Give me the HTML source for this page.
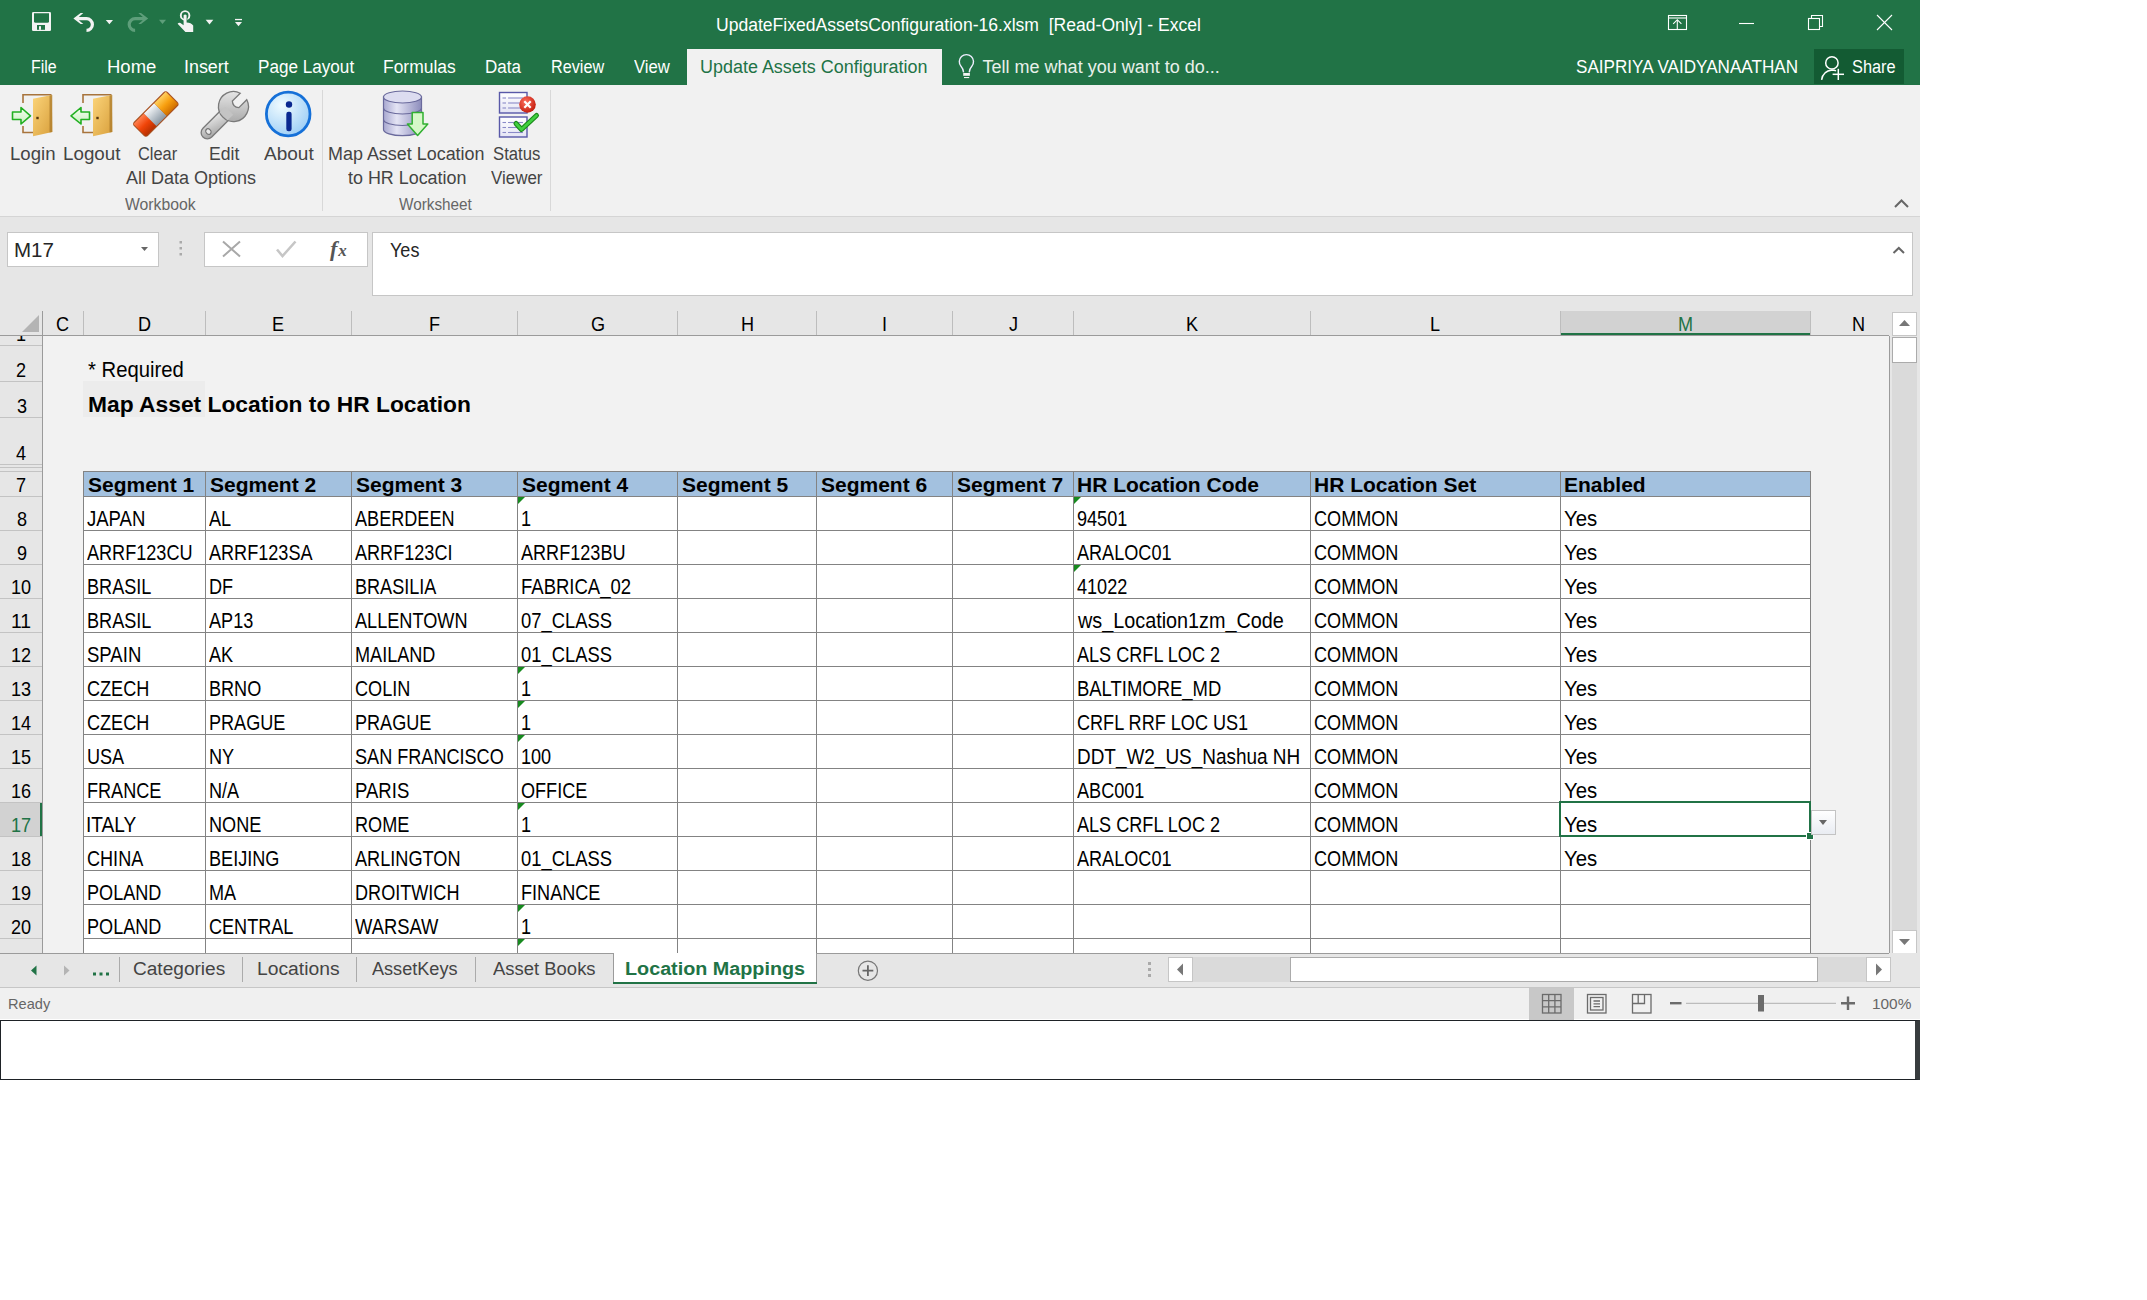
<!DOCTYPE html>
<html><head><meta charset="utf-8"><title>Excel</title>
<style>
*{margin:0;padding:0;box-sizing:border-box}
html,body{width:2147px;height:1300px;overflow:hidden;background:#fff}
body{position:relative;font-family:"Liberation Sans",sans-serif}
.a{position:absolute}
.t{position:absolute;white-space:pre;line-height:1;transform-origin:0 0}
svg{position:absolute;overflow:visible}
</style></head><body>
<div class="a" style="left:0px;top:0px;width:1920px;height:85px;background:#217346"></div>
<div class="a" style="left:687px;top:49px;width:255px;height:36px;background:#f1f1f1"></div>
<div class="t" style="left:716.02px;top:16px;font:normal 18px 'Liberation Sans';line-height:1;color:#fff;transform:scaleX(0.9753)">UpdateFixedAssetsConfiguration-16.xlsm  [Read-Only] - Excel</div>
<div class="t" style="left:31.31px;top:58px;font:normal 18px 'Liberation Sans';line-height:1;color:#fff;transform:scaleX(0.8859)">File</div>
<div class="t" style="left:106.57px;top:58px;font:normal 18px 'Liberation Sans';line-height:1;color:#fff;transform:scaleX(1.0276)">Home</div>
<div class="t" style="left:184.21px;top:58px;font:normal 18px 'Liberation Sans';line-height:1;color:#fff;transform:scaleX(0.9928)">Insert</div>
<div class="t" style="left:257.65px;top:58px;font:normal 18px 'Liberation Sans';line-height:1;color:#fff;transform:scaleX(0.9512)">Page Layout</div>
<div class="t" style="left:382.83px;top:58px;font:normal 18px 'Liberation Sans';line-height:1;color:#fff;transform:scaleX(0.9687)">Formulas</div>
<div class="t" style="left:484.86px;top:58px;font:normal 18px 'Liberation Sans';line-height:1;color:#fff;transform:scaleX(0.9445)">Data</div>
<div class="t" style="left:550.80px;top:58px;font:normal 18px 'Liberation Sans';line-height:1;color:#fff;transform:scaleX(0.8997)">Review</div>
<div class="t" style="left:634.20px;top:58px;font:normal 18px 'Liberation Sans';line-height:1;color:#fff;transform:scaleX(0.9272)">View</div>
<div class="t" style="left:699.50px;top:58px;font:normal 18px 'Liberation Sans';line-height:1;color:#217346;transform:scaleX(0.9973)">Update Assets Configuration</div>
<div class="t" style="left:982.60px;top:58px;font:normal 18px 'Liberation Sans';line-height:1;color:#e8f0ea">Tell me what you want to do...</div>
<div class="t" style="left:1576.40px;top:58px;font:normal 18px 'Liberation Sans';line-height:1;color:#fff;transform:scaleX(0.9498)">SAIPRIYA VAIDYANAATHAN</div>
<div class="a" style="left:1814px;top:49px;width:90px;height:35px;background:#135b33"></div>
<div class="t" style="left:1852.00px;top:58px;font:normal 18px 'Liberation Sans';line-height:1;color:#fff;transform:scaleX(0.9079)">Share</div>
<svg class="a" style="left:0px;top:0px" width="260" height="48" viewBox="0 0 260 48"><rect x="32" y="12" width="19" height="19" rx="1.2" fill="#f3f3f3"/><path d="M34,13.2 H49 V21.2 Q49,22.8 47.4,22.8 H35.6 Q34,22.8 34,21.2 Z" fill="#217346"/><rect x="37" y="25" width="8" height="4.8" fill="#217346"/><rect x="39" y="26.2" width="2" height="3.6" fill="#f3f3f3"/><path d="M73.4,18.5 L80.6,12.9 H83.3 L78.8,17 H86.5 A7.5,7.5 0 0 1 86.5,32 V28.8 A4.3,4.3 0 0 0 86.5,20.2 H78.8 L83.3,24.1 H80.6 Z" fill="#f3f3f3"/><polygon points="105.8,20 113,20 109.4,24.2" fill="#f3f3f3"/><path d="M148.2,18.5 L141,12.9 H138.3 L142.8,17 H135.1 A7.5,7.5 0 0 0 135.1,32 V28.8 A4.3,4.3 0 0 1 135.1,20.2 H142.8 L138.3,24.1 H141 Z" fill="#5e9e7a"/><polygon points="159,19.8 166,19.8 162.5,24" fill="#5e9e7a"/><circle cx="185.1" cy="15.4" r="4.3" fill="none" stroke="#f3f3f3" stroke-width="1.9"/><path d="M183.6,15.2 Q185.1,13.6 186.6,15.2 V22.6" fill="none" stroke="#217346" stroke-width="1.6"/><path d="M183.6,15.2 Q185.1,13.6 186.6,15.2 V22.6 Q191,22.6 193.2,25.6 V32 H185.4 L177.6,23.8 Q178.6,22.2 180.5,22.9 L183.6,25.2 Z" fill="#f3f3f3"/><polygon points="205.7,19.8 213.3,19.8 209.5,24.4" fill="#f3f3f3"/><rect x="235" y="18.9" width="7" height="1.3" fill="#f3f3f3"/><polygon points="235,22 242,22 238.5,26.2" fill="#f3f3f3"/></svg>
<svg class="a" style="left:1660px;top:10px" width="240" height="25" viewBox="1660 10 240 25"><g fill="none" stroke="#fff" stroke-width="1.1"><rect x="1668.5" y="15.5" width="18" height="14"/><line x1="1668.5" y1="18" x2="1686.5" y2="18"/><line x1="1677.3" y1="20" x2="1677.3" y2="29.5"/><polyline points="1673.2,23.8 1677.3,19.7 1681.4,23.8"/><line x1="1739" y1="23.5" x2="1754" y2="23.5"/><rect x="1808.5" y="18.5" width="11" height="11"/><polyline points="1811.5,18.5 1811.5,15.5 1822.5,15.5 1822.5,26.5 1819.5,26.5"/><line x1="1877" y1="15" x2="1892" y2="30"/><line x1="1892" y1="15" x2="1877" y2="30"/></g></svg>
<svg class="a" style="left:955px;top:52px" width="25" height="30" viewBox="955 52 25 30"><path d="M963.6,72.3 Q963,68.5 961,66.3 A7.1,7.1 0 1 1 971.8,66.3 Q969.8,68.5 969.2,72.3" fill="none" stroke="#eef" stroke-width="1.4"/><rect x="963.2" y="73" width="6.7" height="2.8" fill="#f3f3f3"/><rect x="964" y="77" width="5.2" height="1.1" fill="#f3f3f3"/></svg>
<svg class="a" style="left:1815px;top:52px" width="35" height="32" viewBox="1815 52 35 32"><g fill="none" stroke="#fff" stroke-width="1.5"><circle cx="1831.9" cy="62.9" r="6.2"/><path d="M1821.6,79.8 Q1823,71 1832,70 Q1834.5,70 1836,70.8"/><line x1="1832.6" y1="74.3" x2="1844" y2="74.3"/><line x1="1838.3" y1="68.8" x2="1838.3" y2="80"/></g></svg>
<div class="a" style="left:0px;top:85px;width:1920px;height:131px;background:#f1f1f1"></div>
<div class="a" style="left:0px;top:216px;width:1920px;height:1px;background:#d5d5d5"></div>
<div class="t" style="left:10.37px;top:145px;font:normal 18px 'Liberation Sans';line-height:1;color:#444;transform:scaleX(1.0326)">Login</div>
<div class="t" style="left:63.16px;top:145px;font:normal 18px 'Liberation Sans';line-height:1;color:#444;transform:scaleX(1.0434)">Logout</div>
<div class="t" style="left:137.90px;top:145px;font:normal 18px 'Liberation Sans';line-height:1;color:#444;transform:scaleX(0.9089)">Clear</div>
<div class="t" style="left:209.32px;top:145px;font:normal 18px 'Liberation Sans';line-height:1;color:#444;transform:scaleX(0.9762)">Edit</div>
<div class="t" style="left:264.00px;top:145px;font:normal 18px 'Liberation Sans';line-height:1;color:#444;transform:scaleX(1.0566)">About</div>
<div class="t" style="left:126.00px;top:169px;font:normal 18px 'Liberation Sans';line-height:1;color:#444">All Data Options</div>
<div class="t" style="left:328.30px;top:145px;font:normal 18px 'Liberation Sans';line-height:1;color:#444;transform:scaleX(0.9963)">Map Asset Location</div>
<div class="t" style="left:348.20px;top:169px;font:normal 18px 'Liberation Sans';line-height:1;color:#444;transform:scaleX(0.9945)">to HR Location</div>
<div class="t" style="left:493.00px;top:145px;font:normal 18px 'Liberation Sans';line-height:1;color:#444;transform:scaleX(0.9269)">Status</div>
<div class="t" style="left:491.40px;top:169px;font:normal 18px 'Liberation Sans';line-height:1;color:#444;transform:scaleX(0.9415)">Viewer</div>
<div class="t" style="left:125.10px;top:197px;font:normal 16px 'Liberation Sans';line-height:1;color:#666;transform:scaleX(0.9844)">Workbook</div>
<div class="t" style="left:399.40px;top:197px;font:normal 16px 'Liberation Sans';line-height:1;color:#666;transform:scaleX(0.9565)">Worksheet</div>
<div class="a" style="left:322px;top:90px;width:1px;height:121px;background:#d8d8d8"></div>
<div class="a" style="left:550px;top:90px;width:1px;height:121px;background:#d8d8d8"></div>
<svg class="a" style="left:0px;top:85px" width="560" height="60" viewBox="0 85 560 60"><defs>
<linearGradient id="door" x1="0" y1="0" x2="1" y2="1"><stop offset="0" stop-color="#fbd47a"/><stop offset="1" stop-color="#d9a03c"/></linearGradient>
<linearGradient id="arr" x1="0" y1="0" x2="0" y2="1"><stop offset="0" stop-color="#f4fff0"/><stop offset="1" stop-color="#c8f0c0"/></linearGradient>
<linearGradient id="silver" x1="0" y1="0" x2="0" y2="1"><stop offset="0" stop-color="#f6f8fa"/><stop offset="1" stop-color="#8a98a4"/></linearGradient>
<linearGradient id="red" x1="0" y1="0" x2="0" y2="1"><stop offset="0" stop-color="#ff8050"/><stop offset="0.5" stop-color="#f04408"/><stop offset="1" stop-color="#b83000"/></linearGradient>
<linearGradient id="orng" x1="0" y1="0" x2="0" y2="1"><stop offset="0" stop-color="#ffd060"/><stop offset="0.5" stop-color="#f8a010"/><stop offset="1" stop-color="#d07000"/></linearGradient>
<linearGradient id="wr" x1="0" y1="0" x2="1" y2="1"><stop offset="0" stop-color="#f0f0f0"/><stop offset="1" stop-color="#a0a0a0"/></linearGradient>
<radialGradient id="info" cx="0.35" cy="0.3" r="0.8"><stop offset="0" stop-color="#f0fbff"/><stop offset="1" stop-color="#98cbf5"/></radialGradient>
<linearGradient id="db" x1="0" y1="0" x2="1" y2="0"><stop offset="0" stop-color="#a8a8d0"/><stop offset="0.35" stop-color="#e4e4f4"/><stop offset="1" stop-color="#8c8cbc"/></linearGradient>
<radialGradient id="rc" cx="0.4" cy="0.35" r="0.7"><stop offset="0" stop-color="#ff7060"/><stop offset="1" stop-color="#c01808"/></radialGradient>
<linearGradient id="doc" x1="0" y1="0" x2="0" y2="1"><stop offset="0" stop-color="#fff"/><stop offset="1" stop-color="#e4e4f4"/></linearGradient>
</defs><g transform="translate(0,0)"><path d="M23,103 V94.8 H51.5 M23,126 V132.5 H33" fill="none" stroke="#a8743c" stroke-width="1.6"/><polygon points="33,98.8 51.8,95 52.3,132 33,136.2" fill="url(#door)"/><polygon points="49.5,95.5 52.3,95 52.3,132 49.5,132.5" fill="#a8782a" opacity="0.7"/><rect x="36.3" y="116.8" width="2.4" height="2.4" fill="#5a3a10"/></g><g transform="translate(60,0)"><path d="M23,103 V94.8 H51.5 M23,126 V132.5 H33" fill="none" stroke="#a8743c" stroke-width="1.6"/><polygon points="33,98.8 51.8,95 52.3,132 33,136.2" fill="url(#door)"/><polygon points="49.5,95.5 52.3,95 52.3,132 49.5,132.5" fill="#a8782a" opacity="0.7"/><rect x="36.3" y="116.8" width="2.4" height="2.4" fill="#5a3a10"/></g><polygon points="12.5,112 21,112 21,107.5 30.5,115.8 21,124 21,119.5 12.5,119.5" fill="url(#arr)" stroke="#22b022" stroke-width="1.6" stroke-linejoin="round"/><polygon points="89.5,112 81,112 81,107.5 71,115.8 81,124 81,119.5 89.5,119.5" fill="url(#arr)" stroke="#22b022" stroke-width="1.6" stroke-linejoin="round"/><g transform="translate(155.8,114) rotate(-45)"><rect x="-24" y="-10" width="48" height="20" rx="3.5" fill="#a85020"/><path d="M-22.8,-8.8 H-8 V8.8 H-22.8 Q-23,0 -22.8,-8.8 Z" fill="url(#red)"/><rect x="-8" y="-8.8" width="14.5" height="17.6" fill="url(#silver)"/><path d="M6.5,-8.8 H22.8 Q23,0 22.8,8.8 H6.5 Z" fill="url(#orng)"/></g><g transform="translate(233.5,106.5) rotate(45)"><path d="M-6.2,8 H6.2 V37 A6.2,6.2 0 0 1 -6.2,37 Z" fill="url(#wr)" stroke="#7a7a7a" stroke-width="1.3"/><path d="M-4.6,-14.2 A15,15 0 1 0 4.6,-14.2 V-3 Q0,1.2 -4.6,-3 Z" fill="url(#wr)" stroke="#7a7a7a" stroke-width="1.3"/><rect x="-5.55" y="6" width="11.1" height="8" fill="#c4c4c4"/><ellipse cx="0" cy="35.5" rx="3" ry="2.4" fill="#eaeaea" stroke="#777" stroke-width="1.2"/></g><circle cx="288.2" cy="114" r="21.8" fill="url(#info)" stroke="#1570d8" stroke-width="2.8"/><circle cx="289" cy="104.5" r="3.2" fill="#0a2890"/><rect x="286.3" y="111.8" width="5.3" height="19.5" rx="2.2" fill="#0a2890"/><path d="M383.5,97 V129.5 A19,6.2 0 0 0 421.5,129.5 V97 Z" fill="url(#db)" stroke="#6a6a9c" stroke-width="1.2"/><ellipse cx="402.5" cy="97" rx="19" ry="6" fill="#dcdcf0" stroke="#6a6a9c" stroke-width="1.2"/><path d="M383.5,108 A19,6 0 0 0 421.5,108 M383.5,119.5 A19,6 0 0 0 421.5,119.5" fill="none" stroke="#6a6a9c" stroke-width="1.2"/><polygon points="412.2,112.5 423,112.5 423,124 427.8,124 417.6,135.5 407.4,124 412.2,124" fill="#d6f8c8" stroke="#30b030" stroke-width="1.5" stroke-linejoin="round"/><rect x="499.5" y="92.5" width="27.5" height="20.5" fill="url(#doc)" stroke="#5858a8" stroke-width="1.4"/><line x1="502.5" y1="98.0" x2="506" y2="98.0" stroke="#8a8ac8" stroke-width="1.1"/><line x1="508" y1="98.0" x2="523" y2="98.0" stroke="#8a8ac8" stroke-width="1.1"/><line x1="502.5" y1="103.0" x2="506" y2="103.0" stroke="#8a8ac8" stroke-width="1.1"/><line x1="508" y1="103.0" x2="523" y2="103.0" stroke="#8a8ac8" stroke-width="1.1"/><line x1="502.5" y1="108.0" x2="506" y2="108.0" stroke="#8a8ac8" stroke-width="1.1"/><line x1="508" y1="108.0" x2="523" y2="108.0" stroke="#8a8ac8" stroke-width="1.1"/><rect x="499.5" y="117" width="27.5" height="20" fill="url(#doc)" stroke="#5858a8" stroke-width="1.4"/><line x1="502.5" y1="122.5" x2="506" y2="122.5" stroke="#8a8ac8" stroke-width="1.1"/><line x1="508" y1="122.5" x2="523" y2="122.5" stroke="#8a8ac8" stroke-width="1.1"/><line x1="502.5" y1="127.5" x2="506" y2="127.5" stroke="#8a8ac8" stroke-width="1.1"/><line x1="508" y1="127.5" x2="523" y2="127.5" stroke="#8a8ac8" stroke-width="1.1"/><line x1="502.5" y1="132.5" x2="506" y2="132.5" stroke="#8a8ac8" stroke-width="1.1"/><line x1="508" y1="132.5" x2="523" y2="132.5" stroke="#8a8ac8" stroke-width="1.1"/><circle cx="527.5" cy="104.5" r="8.3" fill="url(#rc)"/><path d="M524.3,101.3 L530.7,107.7 M530.7,101.3 L524.3,107.7" stroke="#fff" stroke-width="2.2"/><path d="M516,123.5 L521.5,129.5 L536.5,115.5" fill="none" stroke="#1a8a1a" stroke-width="5" stroke-linejoin="round" stroke-linecap="round"/><path d="M516,123.5 L521.5,129.5 L536.5,115.5" fill="none" stroke="#40d040" stroke-width="2.6" stroke-linejoin="round" stroke-linecap="round"/></svg>
<div class="a" style="left:0px;top:217px;width:1920px;height:94px;background:#e6e6e6"></div>
<div class="a" style="left:7px;top:232px;width:152px;height:35px;background:#fff;border:1px solid #c6c6c6"></div>
<div class="t" style="left:14.37px;top:240px;font:normal 20px 'Liberation Sans';line-height:1;color:#262626;transform:scaleX(1.0269)">M17</div>
<div class="a" style="left:204px;top:232px;width:164px;height:35px;background:#fff;border:1px solid #c6c6c6"></div>
<div class="a" style="left:372px;top:232px;width:1541px;height:64px;background:#fff;border:1px solid #c6c6c6"></div>
<div class="t" style="left:389.50px;top:240px;font:normal 20px 'Liberation Sans';line-height:1;color:#262626;transform:scaleX(0.9011)">Yes</div>
<svg class="a" style="left:130px;top:195px" width="1790" height="70" viewBox="130 195 1790 70"><polygon points="141,247 148,247 144.5,251" fill="#666"/><rect x="179.5" y="241" width="2.5" height="2.5" fill="#aaa"/><rect x="179.5" y="247" width="2.5" height="2.5" fill="#aaa"/><rect x="179.5" y="253" width="2.5" height="2.5" fill="#aaa"/><path d="M223,241.5 L240,256.5 M240,241.5 L223,256.5" stroke="#a8a8a8" stroke-width="2"/><path d="M277,249.5 L282.5,256 L295.5,241.5" fill="none" stroke="#c6c6c6" stroke-width="2.6"/><text x="330" y="256" font-family="Liberation Serif" font-style="italic" font-weight="bold" font-size="22" fill="#555">f<tspan font-size="17" dx="1">x</tspan></text><polyline points="1893.5,253 1898.8,248 1904,253" fill="none" stroke="#666" stroke-width="2"/><polyline points="1895,207 1901.5,200.5 1908,207" fill="none" stroke="#666" stroke-width="2"/></svg>
<div class="a" style="left:0px;top:311px;width:1890px;height:25px;background:#e6e6e6"></div>
<div class="a" style="left:83px;top:311px;width:1px;height:24px;background:#bdbdbd"></div>
<div class="t" style="left:56.11px;top:313px;font:normal 21px 'Liberation Sans';line-height:1;color:#000;transform:scaleX(0.8613)">C</div>
<div class="a" style="left:205px;top:311px;width:1px;height:24px;background:#bdbdbd"></div>
<div class="t" style="left:137.61px;top:313px;font:normal 21px 'Liberation Sans';line-height:1;color:#000;transform:scaleX(0.8613)">D</div>
<div class="a" style="left:351px;top:311px;width:1px;height:24px;background:#bdbdbd"></div>
<div class="t" style="left:272.04px;top:313px;font:normal 21px 'Liberation Sans';line-height:1;color:#000;transform:scaleX(0.8613)">E</div>
<div class="a" style="left:517px;top:311px;width:1px;height:24px;background:#bdbdbd"></div>
<div class="t" style="left:428.90px;top:313px;font:normal 21px 'Liberation Sans';line-height:1;color:#000;transform:scaleX(0.8613)">F</div>
<div class="a" style="left:677px;top:311px;width:1px;height:24px;background:#bdbdbd"></div>
<div class="t" style="left:590.61px;top:313px;font:normal 21px 'Liberation Sans';line-height:1;color:#000;transform:scaleX(0.8613)">G</div>
<div class="a" style="left:816px;top:311px;width:1px;height:24px;background:#bdbdbd"></div>
<div class="t" style="left:740.54px;top:313px;font:normal 21px 'Liberation Sans';line-height:1;color:#000;transform:scaleX(0.8613)">H</div>
<div class="a" style="left:952px;top:311px;width:1px;height:24px;background:#bdbdbd"></div>
<div class="t" style="left:882.35px;top:313px;font:normal 21px 'Liberation Sans';line-height:1;color:#000;transform:scaleX(0.8613)">I</div>
<div class="a" style="left:1073px;top:311px;width:1px;height:24px;background:#bdbdbd"></div>
<div class="t" style="left:1009.12px;top:313px;font:normal 21px 'Liberation Sans';line-height:1;color:#000;transform:scaleX(0.8613)">J</div>
<div class="a" style="left:1310px;top:311px;width:1px;height:24px;background:#bdbdbd"></div>
<div class="t" style="left:1185.54px;top:313px;font:normal 21px 'Liberation Sans';line-height:1;color:#000;transform:scaleX(0.8613)">K</div>
<div class="a" style="left:1560px;top:311px;width:1px;height:24px;background:#bdbdbd"></div>
<div class="t" style="left:1430.33px;top:313px;font:normal 21px 'Liberation Sans';line-height:1;color:#000;transform:scaleX(0.8613)">L</div>
<div class="a" style="left:1561px;top:311px;width:249px;height:24px;background:#d2d2d2"></div>
<div class="a" style="left:1810px;top:311px;width:1px;height:24px;background:#bdbdbd"></div>
<div class="t" style="left:1678.18px;top:313px;font:normal 21px 'Liberation Sans';line-height:1;color:#217346;transform:scaleX(0.8613)">M</div>
<div class="t" style="left:1852.04px;top:313px;font:normal 21px 'Liberation Sans';line-height:1;color:#000;transform:scaleX(0.8613)">N</div>
<div class="a" style="left:0px;top:335px;width:1889px;height:1px;background:#9b9b9b"></div>
<div class="a" style="left:1561px;top:333px;width:249px;height:2px;background:#217346"></div>
<svg class="a" style="left:0;top:311px" width="42" height="24"><polygon points="22,21 39,4 39,21" fill="#b4b4b4"/></svg>
<div class="a" style="left:0px;top:336px;width:42px;height:617px;background:#e6e6e6"></div>
<div class="a" style="left:42px;top:336px;width:1847px;height:617px;background:#f2f2f2"></div>
<div class="a" style="left:0px;top:802px;width:41px;height:34px;background:#d2d2d2"></div>
<div class="a" style="left:42px;top:311px;width:1px;height:642px;background:#9b9b9b"></div>
<div class="a" style="left:40px;top:803px;width:2px;height:33px;background:#217346"></div>
<div class="a" style="left:1889px;top:336px;width:1px;height:617px;background:#9b9b9b"></div>
<div class="a" style="left:0px;top:345px;width:42px;height:1px;background:#c3c3c3"></div>
<div class="a" style="left:0px;top:381px;width:42px;height:1px;background:#c3c3c3"></div>
<div class="a" style="left:0px;top:417px;width:42px;height:1px;background:#c3c3c3"></div>
<div class="a" style="left:0px;top:464px;width:42px;height:1px;background:#c3c3c3"></div>
<div class="a" style="left:0px;top:467px;width:42px;height:1px;background:#c3c3c3"></div>
<div class="a" style="left:0px;top:471px;width:42px;height:1px;background:#c3c3c3"></div>
<div class="a" style="left:0px;top:496px;width:42px;height:1px;background:#c3c3c3"></div>
<div class="a" style="left:0px;top:530px;width:42px;height:1px;background:#c3c3c3"></div>
<div class="a" style="left:0px;top:564px;width:42px;height:1px;background:#c3c3c3"></div>
<div class="a" style="left:0px;top:598px;width:42px;height:1px;background:#c3c3c3"></div>
<div class="a" style="left:0px;top:632px;width:42px;height:1px;background:#c3c3c3"></div>
<div class="a" style="left:0px;top:666px;width:42px;height:1px;background:#c3c3c3"></div>
<div class="a" style="left:0px;top:700px;width:42px;height:1px;background:#c3c3c3"></div>
<div class="a" style="left:0px;top:734px;width:42px;height:1px;background:#c3c3c3"></div>
<div class="a" style="left:0px;top:768px;width:42px;height:1px;background:#c3c3c3"></div>
<div class="a" style="left:0px;top:802px;width:42px;height:1px;background:#c3c3c3"></div>
<div class="a" style="left:0px;top:836px;width:42px;height:1px;background:#c3c3c3"></div>
<div class="a" style="left:0px;top:870px;width:42px;height:1px;background:#c3c3c3"></div>
<div class="a" style="left:0px;top:904px;width:42px;height:1px;background:#c3c3c3"></div>
<div class="a" style="left:0px;top:938px;width:42px;height:1px;background:#c3c3c3"></div>
<div class="a" style="left:0;top:336px;width:42px;height:617px;overflow:hidden"><div class="a" style="left:0;top:-336px;width:42px;height:1300px">
<div class="t" style="left:16.33px;top:323px;font:normal 21px 'Liberation Sans';line-height:1;color:#000;transform:scaleX(0.8613)">1</div>
<div class="t" style="left:16.33px;top:359px;font:normal 21px 'Liberation Sans';line-height:1;color:#000;transform:scaleX(0.8613)">2</div>
<div class="t" style="left:16.76px;top:395px;font:normal 21px 'Liberation Sans';line-height:1;color:#000;transform:scaleX(0.8613)">3</div>
<div class="t" style="left:16.33px;top:442px;font:normal 21px 'Liberation Sans';line-height:1;color:#000;transform:scaleX(0.8613)">4</div>
<div class="t" style="left:16.33px;top:474px;font:normal 21px 'Liberation Sans';line-height:1;color:#000;transform:scaleX(0.8613)">7</div>
<div class="t" style="left:16.76px;top:508px;font:normal 21px 'Liberation Sans';line-height:1;color:#000;transform:scaleX(0.8613)">8</div>
<div class="t" style="left:16.76px;top:542px;font:normal 21px 'Liberation Sans';line-height:1;color:#000;transform:scaleX(0.8613)">9</div>
<div class="t" style="left:11.30px;top:576px;font:normal 21px 'Liberation Sans';line-height:1;color:#000;transform:scaleX(0.8613)">10</div>
<div class="t" style="left:11.29px;top:610px;font:normal 21px 'Liberation Sans';line-height:1;color:#000;transform:scaleX(0.9229)">11</div>
<div class="t" style="left:11.30px;top:644px;font:normal 21px 'Liberation Sans';line-height:1;color:#000;transform:scaleX(0.8613)">12</div>
<div class="t" style="left:11.30px;top:678px;font:normal 21px 'Liberation Sans';line-height:1;color:#000;transform:scaleX(0.8613)">13</div>
<div class="t" style="left:10.87px;top:712px;font:normal 21px 'Liberation Sans';line-height:1;color:#000;transform:scaleX(0.8613)">14</div>
<div class="t" style="left:11.30px;top:746px;font:normal 21px 'Liberation Sans';line-height:1;color:#000;transform:scaleX(0.8613)">15</div>
<div class="t" style="left:11.30px;top:780px;font:normal 21px 'Liberation Sans';line-height:1;color:#000;transform:scaleX(0.8613)">16</div>
<div class="t" style="left:11.30px;top:814px;font:normal 21px 'Liberation Sans';line-height:1;color:#217346;transform:scaleX(0.8613)">17</div>
<div class="t" style="left:11.30px;top:848px;font:normal 21px 'Liberation Sans';line-height:1;color:#000;transform:scaleX(0.8613)">18</div>
<div class="t" style="left:11.30px;top:882px;font:normal 21px 'Liberation Sans';line-height:1;color:#000;transform:scaleX(0.8613)">19</div>
<div class="t" style="left:11.30px;top:916px;font:normal 21px 'Liberation Sans';line-height:1;color:#000;transform:scaleX(0.8613)">20</div>
</div></div>
<div class="a" style="left:83px;top:381px;width:122px;height:36px;background:#ececec"></div>
<div class="t" style="left:87.70px;top:359px;font:normal 22px 'Liberation Sans';line-height:1;color:#000;transform:scaleX(0.9210)">* Required</div>
<div class="t" style="left:87.76px;top:394px;font:bold 22px 'Liberation Sans';line-height:1;color:#000;transform:scaleX(1.0363)">Map Asset Location to HR Location</div>
<div class="a" style="left:83px;top:471px;width:1727px;height:25px;background:#a3c1df"></div>
<div class="a" style="left:83px;top:496px;width:1727px;height:457px;background:#fff"></div>
<div class="a" style="left:83px;top:471px;width:1px;height:482px;background:#838383"></div>
<div class="a" style="left:205px;top:471px;width:1px;height:482px;background:#838383"></div>
<div class="a" style="left:351px;top:471px;width:1px;height:482px;background:#838383"></div>
<div class="a" style="left:517px;top:471px;width:1px;height:482px;background:#838383"></div>
<div class="a" style="left:677px;top:471px;width:1px;height:482px;background:#838383"></div>
<div class="a" style="left:816px;top:471px;width:1px;height:482px;background:#838383"></div>
<div class="a" style="left:952px;top:471px;width:1px;height:482px;background:#838383"></div>
<div class="a" style="left:1073px;top:471px;width:1px;height:482px;background:#838383"></div>
<div class="a" style="left:1310px;top:471px;width:1px;height:482px;background:#838383"></div>
<div class="a" style="left:1560px;top:471px;width:1px;height:482px;background:#838383"></div>
<div class="a" style="left:1810px;top:471px;width:1px;height:482px;background:#838383"></div>
<div class="a" style="left:83px;top:471px;width:1728px;height:1px;background:#838383"></div>
<div class="a" style="left:83px;top:496px;width:1728px;height:1px;background:#838383"></div>
<div class="a" style="left:83px;top:530px;width:1728px;height:1px;background:#838383"></div>
<div class="a" style="left:83px;top:564px;width:1728px;height:1px;background:#838383"></div>
<div class="a" style="left:83px;top:598px;width:1728px;height:1px;background:#838383"></div>
<div class="a" style="left:83px;top:632px;width:1728px;height:1px;background:#838383"></div>
<div class="a" style="left:83px;top:666px;width:1728px;height:1px;background:#838383"></div>
<div class="a" style="left:83px;top:700px;width:1728px;height:1px;background:#838383"></div>
<div class="a" style="left:83px;top:734px;width:1728px;height:1px;background:#838383"></div>
<div class="a" style="left:83px;top:768px;width:1728px;height:1px;background:#838383"></div>
<div class="a" style="left:83px;top:802px;width:1728px;height:1px;background:#838383"></div>
<div class="a" style="left:83px;top:836px;width:1728px;height:1px;background:#838383"></div>
<div class="a" style="left:83px;top:870px;width:1728px;height:1px;background:#838383"></div>
<div class="a" style="left:83px;top:904px;width:1728px;height:1px;background:#838383"></div>
<div class="a" style="left:83px;top:938px;width:1728px;height:1px;background:#838383"></div>
<div class="t" style="left:88.00px;top:474px;font:bold 21px 'Liberation Sans';line-height:1;color:#000">Segment 1</div>
<div class="t" style="left:210.00px;top:474px;font:bold 21px 'Liberation Sans';line-height:1;color:#000">Segment 2</div>
<div class="t" style="left:356.00px;top:474px;font:bold 21px 'Liberation Sans';line-height:1;color:#000">Segment 3</div>
<div class="t" style="left:522.00px;top:474px;font:bold 21px 'Liberation Sans';line-height:1;color:#000">Segment 4</div>
<div class="t" style="left:682.00px;top:474px;font:bold 21px 'Liberation Sans';line-height:1;color:#000">Segment 5</div>
<div class="t" style="left:821.00px;top:474px;font:bold 21px 'Liberation Sans';line-height:1;color:#000">Segment 6</div>
<div class="t" style="left:957.00px;top:474px;font:bold 21px 'Liberation Sans';line-height:1;color:#000">Segment 7</div>
<div class="t" style="left:1077.00px;top:474px;font:bold 21px 'Liberation Sans';line-height:1;color:#000">HR Location Code</div>
<div class="t" style="left:1314.00px;top:474px;font:bold 21px 'Liberation Sans';line-height:1;color:#000">HR Location Set</div>
<div class="t" style="left:1564.00px;top:474px;font:bold 21px 'Liberation Sans';line-height:1;color:#000">Enabled</div>
<div class="t" style="left:87.40px;top:508px;font:normal 22px 'Liberation Sans';line-height:1;color:#000;transform:scaleX(0.8415)">JAPAN</div>
<div class="t" style="left:209.40px;top:508px;font:normal 22px 'Liberation Sans';line-height:1;color:#000;transform:scaleX(0.8221)">AL</div>
<div class="t" style="left:355.40px;top:508px;font:normal 22px 'Liberation Sans';line-height:1;color:#000;transform:scaleX(0.8222)">ABERDEEN</div>
<div class="t" style="left:520.58px;top:508px;font:normal 22px 'Liberation Sans';line-height:1;color:#000;transform:scaleX(0.8221)">1</div>
<div class="t" style="left:1076.58px;top:508px;font:normal 22px 'Liberation Sans';line-height:1;color:#000;transform:scaleX(0.8221)">94501</div>
<div class="t" style="left:1313.58px;top:508px;font:normal 22px 'Liberation Sans';line-height:1;color:#000;transform:scaleX(0.8221)">COMMON</div>
<div class="t" style="left:1564.40px;top:508px;font:normal 22px 'Liberation Sans';line-height:1;color:#000;transform:scaleX(0.9266)">Yes</div>
<div class="t" style="left:87.40px;top:542px;font:normal 22px 'Liberation Sans';line-height:1;color:#000;transform:scaleX(0.8221)">ARRF123CU</div>
<div class="t" style="left:209.40px;top:542px;font:normal 22px 'Liberation Sans';line-height:1;color:#000;transform:scaleX(0.8221)">ARRF123SA</div>
<div class="t" style="left:355.40px;top:542px;font:normal 22px 'Liberation Sans';line-height:1;color:#000;transform:scaleX(0.8221)">ARRF123CI</div>
<div class="t" style="left:521.40px;top:542px;font:normal 22px 'Liberation Sans';line-height:1;color:#000;transform:scaleX(0.8221)">ARRF123BU</div>
<div class="t" style="left:1077.40px;top:542px;font:normal 22px 'Liberation Sans';line-height:1;color:#000;transform:scaleX(0.8221)">ARALOC01</div>
<div class="t" style="left:1313.58px;top:542px;font:normal 22px 'Liberation Sans';line-height:1;color:#000;transform:scaleX(0.8221)">COMMON</div>
<div class="t" style="left:1564.40px;top:542px;font:normal 22px 'Liberation Sans';line-height:1;color:#000;transform:scaleX(0.9266)">Yes</div>
<div class="t" style="left:86.58px;top:576px;font:normal 22px 'Liberation Sans';line-height:1;color:#000;transform:scaleX(0.8222)">BRASIL</div>
<div class="t" style="left:208.58px;top:576px;font:normal 22px 'Liberation Sans';line-height:1;color:#000;transform:scaleX(0.8221)">DF</div>
<div class="t" style="left:354.58px;top:576px;font:normal 22px 'Liberation Sans';line-height:1;color:#000;transform:scaleX(0.8221)">BRASILIA</div>
<div class="t" style="left:520.56px;top:576px;font:normal 22px 'Liberation Sans';line-height:1;color:#000;transform:scaleX(0.8416)">FABRICA_02</div>
<div class="t" style="left:1077.40px;top:576px;font:normal 22px 'Liberation Sans';line-height:1;color:#000;transform:scaleX(0.8221)">41022</div>
<div class="t" style="left:1313.58px;top:576px;font:normal 22px 'Liberation Sans';line-height:1;color:#000;transform:scaleX(0.8221)">COMMON</div>
<div class="t" style="left:1564.40px;top:576px;font:normal 22px 'Liberation Sans';line-height:1;color:#000;transform:scaleX(0.9266)">Yes</div>
<div class="t" style="left:86.58px;top:610px;font:normal 22px 'Liberation Sans';line-height:1;color:#000;transform:scaleX(0.8222)">BRASIL</div>
<div class="t" style="left:209.40px;top:610px;font:normal 22px 'Liberation Sans';line-height:1;color:#000;transform:scaleX(0.8221)">AP13</div>
<div class="t" style="left:355.40px;top:610px;font:normal 22px 'Liberation Sans';line-height:1;color:#000;transform:scaleX(0.8245)">ALLENTOWN</div>
<div class="t" style="left:521.40px;top:610px;font:normal 22px 'Liberation Sans';line-height:1;color:#000;transform:scaleX(0.8364)">07_CLASS</div>
<div class="t" style="left:1078.30px;top:610px;font:normal 22px 'Liberation Sans';line-height:1;color:#000;transform:scaleX(0.9001)">ws_Location1zm_Code</div>
<div class="t" style="left:1313.58px;top:610px;font:normal 22px 'Liberation Sans';line-height:1;color:#000;transform:scaleX(0.8221)">COMMON</div>
<div class="t" style="left:1564.40px;top:610px;font:normal 22px 'Liberation Sans';line-height:1;color:#000;transform:scaleX(0.9266)">Yes</div>
<div class="t" style="left:86.56px;top:644px;font:normal 22px 'Liberation Sans';line-height:1;color:#000;transform:scaleX(0.8430)">SPAIN</div>
<div class="t" style="left:209.40px;top:644px;font:normal 22px 'Liberation Sans';line-height:1;color:#000;transform:scaleX(0.8221)">AK</div>
<div class="t" style="left:354.58px;top:644px;font:normal 22px 'Liberation Sans';line-height:1;color:#000;transform:scaleX(0.8221)">MAILAND</div>
<div class="t" style="left:521.40px;top:644px;font:normal 22px 'Liberation Sans';line-height:1;color:#000;transform:scaleX(0.8364)">01_CLASS</div>
<div class="t" style="left:1077.40px;top:644px;font:normal 22px 'Liberation Sans';line-height:1;color:#000;transform:scaleX(0.8221)">ALS CRFL LOC 2</div>
<div class="t" style="left:1313.58px;top:644px;font:normal 22px 'Liberation Sans';line-height:1;color:#000;transform:scaleX(0.8221)">COMMON</div>
<div class="t" style="left:1564.40px;top:644px;font:normal 22px 'Liberation Sans';line-height:1;color:#000;transform:scaleX(0.9266)">Yes</div>
<div class="t" style="left:86.58px;top:678px;font:normal 22px 'Liberation Sans';line-height:1;color:#000;transform:scaleX(0.8221)">CZECH</div>
<div class="t" style="left:208.58px;top:678px;font:normal 22px 'Liberation Sans';line-height:1;color:#000;transform:scaleX(0.8221)">BRNO</div>
<div class="t" style="left:354.58px;top:678px;font:normal 22px 'Liberation Sans';line-height:1;color:#000;transform:scaleX(0.8221)">COLIN</div>
<div class="t" style="left:520.58px;top:678px;font:normal 22px 'Liberation Sans';line-height:1;color:#000;transform:scaleX(0.8221)">1</div>
<div class="t" style="left:1076.56px;top:678px;font:normal 22px 'Liberation Sans';line-height:1;color:#000;transform:scaleX(0.8390)">BALTIMORE_MD</div>
<div class="t" style="left:1313.58px;top:678px;font:normal 22px 'Liberation Sans';line-height:1;color:#000;transform:scaleX(0.8221)">COMMON</div>
<div class="t" style="left:1564.40px;top:678px;font:normal 22px 'Liberation Sans';line-height:1;color:#000;transform:scaleX(0.9266)">Yes</div>
<div class="t" style="left:86.58px;top:712px;font:normal 22px 'Liberation Sans';line-height:1;color:#000;transform:scaleX(0.8221)">CZECH</div>
<div class="t" style="left:208.58px;top:712px;font:normal 22px 'Liberation Sans';line-height:1;color:#000;transform:scaleX(0.8221)">PRAGUE</div>
<div class="t" style="left:354.58px;top:712px;font:normal 22px 'Liberation Sans';line-height:1;color:#000;transform:scaleX(0.8221)">PRAGUE</div>
<div class="t" style="left:520.58px;top:712px;font:normal 22px 'Liberation Sans';line-height:1;color:#000;transform:scaleX(0.8221)">1</div>
<div class="t" style="left:1076.58px;top:712px;font:normal 22px 'Liberation Sans';line-height:1;color:#000;transform:scaleX(0.8221)">CRFL RRF LOC US1</div>
<div class="t" style="left:1313.58px;top:712px;font:normal 22px 'Liberation Sans';line-height:1;color:#000;transform:scaleX(0.8221)">COMMON</div>
<div class="t" style="left:1564.40px;top:712px;font:normal 22px 'Liberation Sans';line-height:1;color:#000;transform:scaleX(0.9266)">Yes</div>
<div class="t" style="left:86.58px;top:746px;font:normal 22px 'Liberation Sans';line-height:1;color:#000;transform:scaleX(0.8221)">USA</div>
<div class="t" style="left:208.58px;top:746px;font:normal 22px 'Liberation Sans';line-height:1;color:#000;transform:scaleX(0.8221)">NY</div>
<div class="t" style="left:354.58px;top:746px;font:normal 22px 'Liberation Sans';line-height:1;color:#000;transform:scaleX(0.8222)">SAN FRANCISCO</div>
<div class="t" style="left:520.58px;top:746px;font:normal 22px 'Liberation Sans';line-height:1;color:#000;transform:scaleX(0.8221)">100</div>
<div class="t" style="left:1076.54px;top:746px;font:normal 22px 'Liberation Sans';line-height:1;color:#000;transform:scaleX(0.8609)">DDT_W2_US_Nashua NH</div>
<div class="t" style="left:1313.58px;top:746px;font:normal 22px 'Liberation Sans';line-height:1;color:#000;transform:scaleX(0.8221)">COMMON</div>
<div class="t" style="left:1564.40px;top:746px;font:normal 22px 'Liberation Sans';line-height:1;color:#000;transform:scaleX(0.9266)">Yes</div>
<div class="t" style="left:86.58px;top:780px;font:normal 22px 'Liberation Sans';line-height:1;color:#000;transform:scaleX(0.8221)">FRANCE</div>
<div class="t" style="left:208.58px;top:780px;font:normal 22px 'Liberation Sans';line-height:1;color:#000;transform:scaleX(0.8221)">N/A</div>
<div class="t" style="left:354.56px;top:780px;font:normal 22px 'Liberation Sans';line-height:1;color:#000;transform:scaleX(0.8430)">PARIS</div>
<div class="t" style="left:520.58px;top:780px;font:normal 22px 'Liberation Sans';line-height:1;color:#000;transform:scaleX(0.8222)">OFFICE</div>
<div class="t" style="left:1077.40px;top:780px;font:normal 22px 'Liberation Sans';line-height:1;color:#000;transform:scaleX(0.8221)">ABC001</div>
<div class="t" style="left:1313.58px;top:780px;font:normal 22px 'Liberation Sans';line-height:1;color:#000;transform:scaleX(0.8221)">COMMON</div>
<div class="t" style="left:1564.40px;top:780px;font:normal 22px 'Liberation Sans';line-height:1;color:#000;transform:scaleX(0.9266)">Yes</div>
<div class="t" style="left:85.66px;top:814px;font:normal 22px 'Liberation Sans';line-height:1;color:#000;transform:scaleX(0.8685)">ITALY</div>
<div class="t" style="left:208.58px;top:814px;font:normal 22px 'Liberation Sans';line-height:1;color:#000;transform:scaleX(0.8221)">NONE</div>
<div class="t" style="left:354.58px;top:814px;font:normal 22px 'Liberation Sans';line-height:1;color:#000;transform:scaleX(0.8221)">ROME</div>
<div class="t" style="left:520.58px;top:814px;font:normal 22px 'Liberation Sans';line-height:1;color:#000;transform:scaleX(0.8221)">1</div>
<div class="t" style="left:1077.40px;top:814px;font:normal 22px 'Liberation Sans';line-height:1;color:#000;transform:scaleX(0.8221)">ALS CRFL LOC 2</div>
<div class="t" style="left:1313.58px;top:814px;font:normal 22px 'Liberation Sans';line-height:1;color:#000;transform:scaleX(0.8221)">COMMON</div>
<div class="t" style="left:1564.40px;top:814px;font:normal 22px 'Liberation Sans';line-height:1;color:#000;transform:scaleX(0.9266)">Yes</div>
<div class="t" style="left:86.58px;top:848px;font:normal 22px 'Liberation Sans';line-height:1;color:#000;transform:scaleX(0.8221)">CHINA</div>
<div class="t" style="left:208.58px;top:848px;font:normal 22px 'Liberation Sans';line-height:1;color:#000;transform:scaleX(0.8221)">BEIJING</div>
<div class="t" style="left:355.40px;top:848px;font:normal 22px 'Liberation Sans';line-height:1;color:#000;transform:scaleX(0.8247)">ARLINGTON</div>
<div class="t" style="left:521.40px;top:848px;font:normal 22px 'Liberation Sans';line-height:1;color:#000;transform:scaleX(0.8364)">01_CLASS</div>
<div class="t" style="left:1077.40px;top:848px;font:normal 22px 'Liberation Sans';line-height:1;color:#000;transform:scaleX(0.8221)">ARALOC01</div>
<div class="t" style="left:1313.58px;top:848px;font:normal 22px 'Liberation Sans';line-height:1;color:#000;transform:scaleX(0.8221)">COMMON</div>
<div class="t" style="left:1564.40px;top:848px;font:normal 22px 'Liberation Sans';line-height:1;color:#000;transform:scaleX(0.9266)">Yes</div>
<div class="t" style="left:86.58px;top:882px;font:normal 22px 'Liberation Sans';line-height:1;color:#000;transform:scaleX(0.8221)">POLAND</div>
<div class="t" style="left:208.58px;top:882px;font:normal 22px 'Liberation Sans';line-height:1;color:#000;transform:scaleX(0.8221)">MA</div>
<div class="t" style="left:354.58px;top:882px;font:normal 22px 'Liberation Sans';line-height:1;color:#000;transform:scaleX(0.8222)">DROITWICH</div>
<div class="t" style="left:520.58px;top:882px;font:normal 22px 'Liberation Sans';line-height:1;color:#000;transform:scaleX(0.8222)">FINANCE</div>
<div class="t" style="left:86.58px;top:916px;font:normal 22px 'Liberation Sans';line-height:1;color:#000;transform:scaleX(0.8221)">POLAND</div>
<div class="t" style="left:208.58px;top:916px;font:normal 22px 'Liberation Sans';line-height:1;color:#000;transform:scaleX(0.8221)">CENTRAL</div>
<div class="t" style="left:355.40px;top:916px;font:normal 22px 'Liberation Sans';line-height:1;color:#000;transform:scaleX(0.8356)">WARSAW</div>
<div class="t" style="left:520.58px;top:916px;font:normal 22px 'Liberation Sans';line-height:1;color:#000;transform:scaleX(0.8221)">1</div>
<svg class="a" style="left:518px;top:497px" width="8" height="8"><polygon points="0,0 7,0 0,7" fill="#178a1f"/></svg>
<svg class="a" style="left:518px;top:667px" width="8" height="8"><polygon points="0,0 7,0 0,7" fill="#178a1f"/></svg>
<svg class="a" style="left:518px;top:701px" width="8" height="8"><polygon points="0,0 7,0 0,7" fill="#178a1f"/></svg>
<svg class="a" style="left:518px;top:735px" width="8" height="8"><polygon points="0,0 7,0 0,7" fill="#178a1f"/></svg>
<svg class="a" style="left:518px;top:803px" width="8" height="8"><polygon points="0,0 7,0 0,7" fill="#178a1f"/></svg>
<svg class="a" style="left:518px;top:905px" width="8" height="8"><polygon points="0,0 7,0 0,7" fill="#178a1f"/></svg>
<svg class="a" style="left:518px;top:939px" width="8" height="8"><polygon points="0,0 7,0 0,7" fill="#178a1f"/></svg>
<svg class="a" style="left:1074px;top:497px" width="8" height="8"><polygon points="0,0 7,0 0,7" fill="#178a1f"/></svg>
<svg class="a" style="left:1074px;top:565px" width="8" height="8"><polygon points="0,0 7,0 0,7" fill="#178a1f"/></svg>
<div class="a" style="left:1559px;top:801px;width:252px;height:36px;border:2px solid #217346"></div>
<div class="a" style="left:1806px;top:832px;width:8px;height:8px;background:#217346;border:1px solid #fff"></div>
<div class="a" style="left:1811px;top:810px;width:25px;height:25px;background:linear-gradient(#fff,#e9ecf2);border:1px solid #c3c3c3"></div>
<svg class="a" style="left:1811px;top:810px" width="25" height="25"><polygon points="8,10 16,10 12,15" fill="#666"/></svg>
<div class="a" style="left:1890px;top:311px;width:30px;height:642px;background:#e6e6e6"></div>
<div class="a" style="left:1892px;top:362px;width:25px;height:568px;background:#dadada"></div>
<div class="a" style="left:1892px;top:312px;width:25px;height:24px;background:#fff;border:1px solid #c6c6c6"></div>
<div class="a" style="left:1892px;top:337px;width:25px;height:26px;background:#fff;border:1px solid #ababab"></div>
<div class="a" style="left:1892px;top:930px;width:25px;height:24px;background:#fff;border:1px solid #c6c6c6"></div>
<svg class="a" style="left:1892px;top:312px" width="25" height="24"><polygon points="7,14 18,14 12.5,8" fill="#777"/></svg>
<svg class="a" style="left:1892px;top:930px" width="25" height="24"><polygon points="7,9 18,9 12.5,15" fill="#777"/></svg>
<div class="a" style="left:0px;top:953px;width:1920px;height:35px;background:#e6e6e6"></div>
<div class="a" style="left:0px;top:953px;width:613px;height:1px;background:#9b9b9b"></div>
<div class="a" style="left:816px;top:953px;width:1073px;height:1px;background:#9b9b9b"></div>
<div class="a" style="left:0px;top:987px;width:1920px;height:1px;background:#c6c6c6"></div>
<div class="a" style="left:613px;top:953px;width:204px;height:31px;background:#fff;border-left:1px solid #9b9b9b;border-right:1px solid #9b9b9b"></div>
<div class="a" style="left:613px;top:982px;width:204px;height:2px;background:#217346"></div>
<div class="a" style="left:119px;top:957px;width:1px;height:25px;background:#ababab"></div>
<div class="a" style="left:242px;top:957px;width:1px;height:25px;background:#ababab"></div>
<div class="a" style="left:356px;top:957px;width:1px;height:25px;background:#ababab"></div>
<div class="a" style="left:475px;top:957px;width:1px;height:25px;background:#ababab"></div>
<div class="t" style="left:133.30px;top:960px;font:normal 18px 'Liberation Sans';line-height:1;color:#444;transform:scaleX(1.0592)">Categories</div>
<div class="t" style="left:256.93px;top:960px;font:normal 18px 'Liberation Sans';line-height:1;color:#444;transform:scaleX(1.0716)">Locations</div>
<div class="t" style="left:372.20px;top:960px;font:normal 18px 'Liberation Sans';line-height:1;color:#444;transform:scaleX(1.0055)">AssetKeys</div>
<div class="t" style="left:492.50px;top:960px;font:normal 18px 'Liberation Sans';line-height:1;color:#444;transform:scaleX(1.0255)">Asset Books</div>
<div class="t" style="left:624.70px;top:960px;font:bold 18px 'Liberation Sans';line-height:1;color:#217346;transform:scaleX(1.0977)">Location Mappings</div>
<svg class="a" style="left:20px;top:955px" width="870" height="30" viewBox="20 955 870 30"><polygon points="36.5,965.5 36.5,975.5 31,970.5" fill="#217346"/><polygon points="64,965.5 64,975.5 69.5,970.5" fill="#b4b4b4"/><rect x="93" y="972.5" width="3" height="3" fill="#217346"/><rect x="99.5" y="972.5" width="3" height="3" fill="#217346"/><rect x="106" y="972.5" width="3" height="3" fill="#217346"/><circle cx="867.9" cy="970.7" r="9.6" fill="none" stroke="#777" stroke-width="1.2"/><path d="M862.5,970.7 H873.3 M867.9,965.3 V976.1" stroke="#666" stroke-width="1.8"/></svg>
<div class="a" style="left:1168px;top:957px;width:723px;height:25px;background:#dadada"></div>
<div class="a" style="left:1168px;top:957px;width:25px;height:25px;background:#fff;border:1px solid #c6c6c6"></div>
<div class="a" style="left:1290px;top:957px;width:528px;height:25px;background:#fff;border:1px solid #ababab"></div>
<div class="a" style="left:1866px;top:957px;width:25px;height:25px;background:#fff;border:1px solid #c6c6c6"></div>
<svg class="a" style="left:1168px;top:957px" width="25" height="25"><polygon points="15,6.5 15,18.5 9,12.5" fill="#777"/></svg>
<svg class="a" style="left:1866px;top:957px" width="25" height="25"><polygon points="10,6.5 10,18.5 16,12.5" fill="#777"/></svg>
<div class="a" style="left:1148px;top:962px;width:3px;height:3px;background:#aaa"></div>
<div class="a" style="left:1148px;top:968px;width:3px;height:3px;background:#aaa"></div>
<div class="a" style="left:1148px;top:974px;width:3px;height:3px;background:#aaa"></div>
<div class="a" style="left:0px;top:988px;width:1920px;height:31px;background:#f0f0f0"></div>
<div class="t" style="left:8.03px;top:996px;font:normal 15px 'Liberation Sans';line-height:1;color:#666;transform:scaleX(0.9729)">Ready</div>
<div class="a" style="left:1529px;top:988px;width:45px;height:32px;background:#c8c8c8"></div>
<svg class="a" style="left:1530px;top:988px" width="340" height="32" viewBox="1530 988 340 32"><g fill="none" stroke="#6b6b6b" stroke-width="1.3"><rect x="1542.5" y="994.5" width="18.5" height="18.5"/><path d="M1548.7,994.5 V1013 M1554.9,994.5 V1013 M1542.5,1000.7 H1561 M1542.5,1006.9 H1561"/><rect x="1587.5" y="994.5" width="18.5" height="18.5"/><rect x="1590.5" y="997.5" width="12.5" height="12.5"/><path d="M1593.5,1001 H1600 M1593.5,1003.8 H1600 M1593.5,1006.6 H1600"/><rect x="1632.5" y="994.5" width="18.5" height="18.5"/><path d="M1632.5,1003.5 H1644.5 V994.5 M1638.2,994.5 V1003.5"/></g><rect x="1670" y="1002" width="11.5" height="2.4" fill="#6b6b6b"/><rect x="1686" y="1002.8" width="150" height="1" fill="#b0b0b0"/><rect x="1758" y="995" width="6" height="16.5" fill="#6b6b6b"/><path d="M1841,1003.2 H1855 M1848,996.5 V1010" stroke="#6b6b6b" stroke-width="2.4"/></svg>
<div class="t" style="left:1871.97px;top:996px;font:normal 15px 'Liberation Sans';line-height:1;color:#666;transform:scaleX(1.0263)">100%</div>
<div class="a" style="left:0px;top:1020px;width:1920px;height:60px;background:#fff;border:1px solid #1e2226;border-right:5px solid #383c3e"></div>
</body></html>
